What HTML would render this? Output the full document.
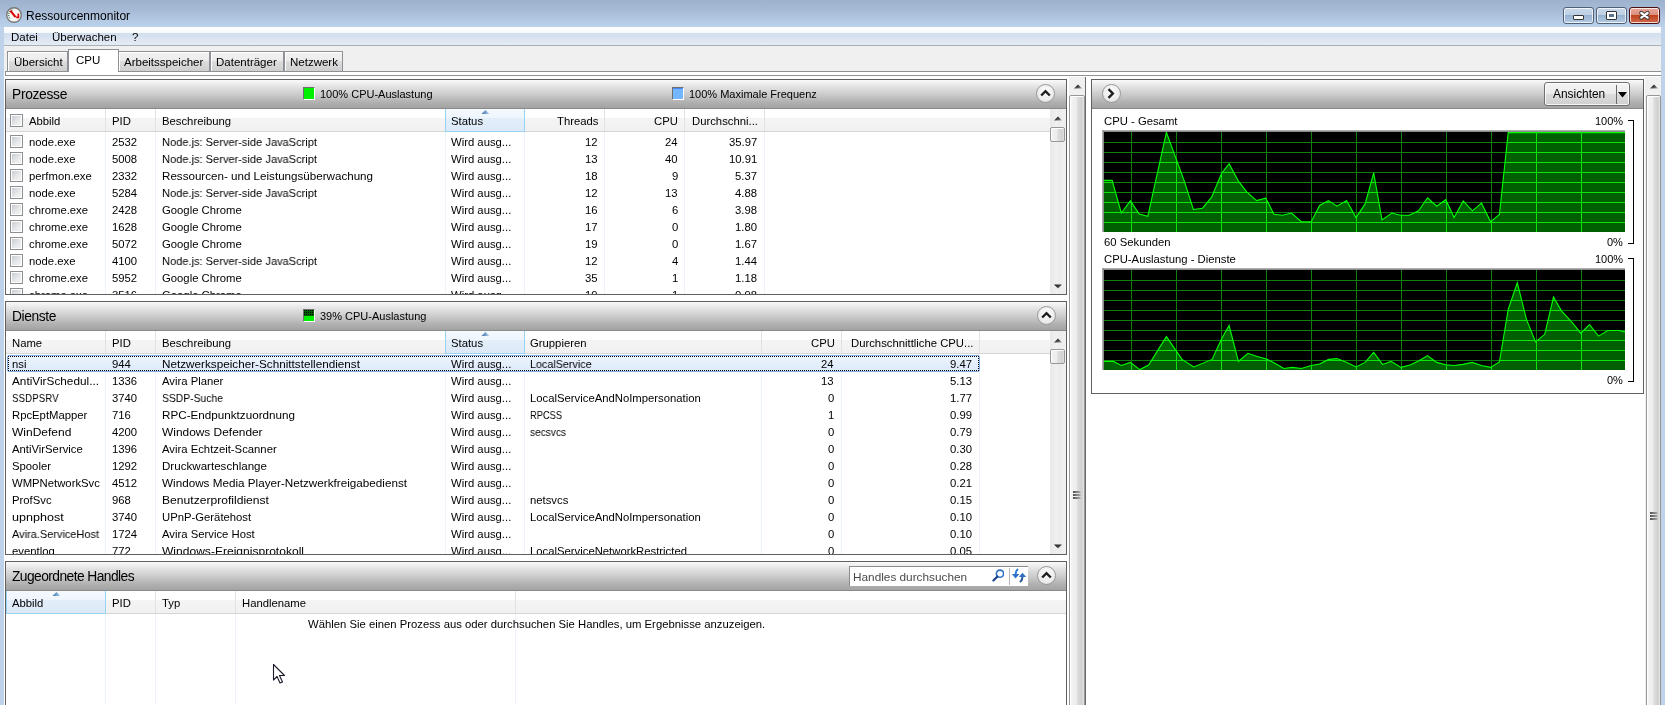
<!DOCTYPE html>
<html><head><meta charset="utf-8"><title>Ressourcenmonitor</title>
<style>
html,body{margin:0;padding:0;}
body{width:1665px;height:705px;overflow:hidden;position:relative;background:#fff;font-family:"Liberation Sans",sans-serif;color:#000;}
div{position:absolute;box-sizing:border-box;}
.t{white-space:pre;line-height:16px;height:16px;will-change:transform;}
svg{position:absolute;}
</style></head><body>
<svg width="0" height="0" style="position:absolute;left:0;top:0"><defs>
<linearGradient id="aup" x1="0" y1="0" x2="1" y2="1"><stop offset="0" stop-color="#111"/><stop offset="0.55" stop-color="#444"/><stop offset="1" stop-color="#b0b0b0"/></linearGradient>
<linearGradient id="adn" x1="0" y1="0" x2="1" y2="1"><stop offset="0" stop-color="#111"/><stop offset="0.55" stop-color="#444"/><stop offset="1" stop-color="#b0b0b0"/></linearGradient>
</defs></svg>
<div style="left:0px;top:0px;width:1665px;height:705px;background:#bed3ea;"></div>
<div style="left:0px;top:0px;width:1665px;height:27px;background:linear-gradient(#9db2ce 0%,#a7bbd6 40%,#b6cbe5 80%,#b9d2ea 100%);"></div>
<svg style="left:5px;top:6px" width="18" height="18" viewBox="0 0 18 18">
<circle cx="9" cy="9" r="7.3" fill="#f6f6f4" stroke="#7a7a7a" stroke-width="1.4"/>
<path d="M4.6 12.2 A5.2 5.2 0 0 1 8.5 3.9" stroke="#4f8a6a" stroke-width="1.5" fill="none" stroke-dasharray="1.1 1.1"/>
<path d="M5.3 4.6 L10.6 11.2" stroke="#e00000" stroke-width="2.1"/>
<path d="M13.4 7.4 L13.4 11.4 L11.2 11.4" stroke="#e00000" stroke-width="1.7" fill="none"/>
</svg>
<div class="t" style="left:26px;top:8px;font-size:12px;">Ressourcenmonitor</div>
<div style="left:1563px;top:7px;width:31px;height:17px;border:1px solid #4f6178;border-radius:3px;background:linear-gradient(#c9d8ea 0%,#bfd0e5 45%,#95b0cf 46%,#b5cbe5 100%);box-shadow:inset 0 0 0 1px rgba(255,255,255,0.75);"></div>
<div style="left:1596px;top:7px;width:31px;height:17px;border:1px solid #4f6178;border-radius:3px;background:linear-gradient(#c9d8ea 0%,#bfd0e5 45%,#95b0cf 46%,#b5cbe5 100%);box-shadow:inset 0 0 0 1px rgba(255,255,255,0.75);"></div>
<div style="left:1629px;top:7px;width:31px;height:17px;border:1px solid #4a1010;border-radius:3px;background:linear-gradient(#e9a89b 0%,#dc8f7e 45%,#c0401c 46%,#cf6a4e 100%);box-shadow:inset 0 0 0 1px rgba(255,255,255,0.75);"></div>
<div style="left:1573px;top:15px;width:11px;height:5px;background:#fff;border:1px solid #333;border-radius:1px;"></div>
<div style="left:1606px;top:11px;width:11px;height:9px;background:#fff;border:1px solid #333;border-radius:1px;"></div>
<div style="left:1609px;top:14px;width:5px;height:3px;background:#5a7190;"></div>
<svg style="left:1638px;top:10px" width="14" height="11" viewBox="0 0 14 11">
<path d="M3.3 3 L9.6 7.6 M9.6 3 L3.3 7.6" stroke="#3a3a3a" stroke-width="4.2" stroke-linecap="round"/>
<path d="M3.3 3 L9.6 7.6 M9.6 3 L3.3 7.6" stroke="#fff" stroke-width="2.3" stroke-linecap="round"/>
</svg>
<div style="left:4px;top:27px;width:1657px;height:19px;background:linear-gradient(#ffffff 0%,#f6f8fa 35%,#d2dfee 36%,#e5ebf3 100%);border-bottom:1px solid #a9b0b8;"></div>
<div class="t" style="left:11px;top:29px;font-size:11.5px;">Datei</div>
<div class="t" style="left:52px;top:29px;font-size:11.5px;">Überwachen</div>
<div class="t" style="left:132px;top:29px;font-size:11.5px;">?</div>
<div style="left:4px;top:46px;width:1657px;height:659px;background:#fff;"></div>
<div style="left:4px;top:46px;width:1657px;height:26px;background:#f0f0f0;"></div>
<div style="left:5px;top:71px;width:1656px;height:5px;background:#fff;border:1px solid #8e9296;border-right:none;"></div>
<div style="left:7px;top:51px;width:61px;height:20px;background:linear-gradient(#f3f3f3 0%,#ebebeb 45%,#dddddd 50%,#cfcfcf 100%);border:1px solid #8e9296;border-bottom:none;box-shadow:inset 1px 1px 0 #fff;"></div>
<div class="t" style="left:14px;top:54px;font-size:11.5px;">Übersicht</div>
<div style="left:118px;top:51px;width:92px;height:20px;background:linear-gradient(#f3f3f3 0%,#ebebeb 45%,#dddddd 50%,#cfcfcf 100%);border:1px solid #8e9296;border-bottom:none;box-shadow:inset 1px 1px 0 #fff;"></div>
<div class="t" style="left:124px;top:54px;font-size:11.5px;">Arbeitsspeicher</div>
<div style="left:210px;top:51px;width:74px;height:20px;background:linear-gradient(#f3f3f3 0%,#ebebeb 45%,#dddddd 50%,#cfcfcf 100%);border:1px solid #8e9296;border-bottom:none;box-shadow:inset 1px 1px 0 #fff;"></div>
<div class="t" style="left:216px;top:54px;font-size:11.5px;">Datenträger</div>
<div style="left:284px;top:51px;width:59px;height:20px;background:linear-gradient(#f3f3f3 0%,#ebebeb 45%,#dddddd 50%,#cfcfcf 100%);border:1px solid #8e9296;border-bottom:none;box-shadow:inset 1px 1px 0 #fff;"></div>
<div class="t" style="left:290px;top:54px;font-size:11.5px;">Netzwerk</div>
<div style="left:68px;top:49px;width:51px;height:23px;background:#fff;border:1px solid #8e9296;border-bottom:none;"></div>
<div class="t" style="left:76px;top:52px;font-size:11.5px;">CPU</div>
<div style="left:5px;top:79px;width:1062px;height:216px;border:1px solid #5f5f5f;border-bottom:1px solid #5f5f5f;background:#fff;"></div>
<div style="left:6px;top:80px;width:1060px;height:29px;background:linear-gradient(#fafafa 0%,#e2e2e2 25%,#c8c8c8 55%,#b0b0b0 80%,#a3a3a3 100%);border-bottom:1px solid #8a8a8a;"></div>
<div class="t" style="left:12px;top:87px;font-size:13.8px;letter-spacing:-0.312px;">Prozesse</div>
<div style="left:303px;top:87px;width:12px;height:13px;border-left:1px solid #707070;border-top:1px solid #707070;border-right:1px solid #fff;border-bottom:1px solid #fff;background:#00f000;"></div>
<div class="t" style="left:320px;top:86px;font-size:11px;">100% CPU-Auslastung</div>
<div style="left:672px;top:87px;width:12px;height:13px;border-left:1px solid #707070;border-top:1px solid #707070;border-right:1px solid #fff;border-bottom:1px solid #fff;background:linear-gradient(#4a88ff 0px,#4a88ff 1px,#74b6ff 1px);"></div>
<div class="t" style="left:689px;top:86px;font-size:11px;">100% Maximale Frequenz</div>
<div style="left:6px;top:109px;width:1044px;height:23px;background:linear-gradient(#ffffff 0%,#ffffff 40%,#f4f4f4 41%,#f1f1f1 100%);border-bottom:1px solid #d5d5d5;"></div>
<div style="left:105px;top:109px;width:1px;height:22px;background:#e2e2e2;"></div>
<div style="left:155px;top:109px;width:1px;height:22px;background:#e2e2e2;"></div>
<div style="left:445px;top:109px;width:1px;height:22px;background:#e2e2e2;"></div>
<div style="left:524px;top:109px;width:1px;height:22px;background:#e2e2e2;"></div>
<div style="left:604px;top:109px;width:1px;height:22px;background:#e2e2e2;"></div>
<div style="left:684px;top:109px;width:1px;height:22px;background:#e2e2e2;"></div>
<div style="left:764px;top:109px;width:1px;height:22px;background:#e2e2e2;"></div>
<div style="left:445px;top:109px;width:80px;height:23px;background:linear-gradient(#f4f9fe 0%,#eef5fc 40%,#e2eef9 41%,#dde9f7 100%);border:1px solid #96d3f5;border-top:none;"></div>
<svg style="left:481px;top:110px" width="9" height="4" viewBox="0 0 9 4"><defs><linearGradient id="sa109" x1="0" x2="1" y1="0" y2="0"><stop offset="0" stop-color="#3f6f9f"/><stop offset="0.5" stop-color="#6f9fcc"/><stop offset="1" stop-color="#c4dcf0"/></linearGradient></defs><path d="M0.5 4 L4.5 0 L8.5 4 Z" fill="url(#sa109)"/></svg>
<div style="left:10px;top:114px;width:13px;height:13px;border:1px solid #8e8f8f;background:linear-gradient(135deg,#c3c8cf 0%,#e6e8ea 55%,#f6f6f6 100%);box-shadow:inset 0 0 0 1px #fff;"></div>
<div class="t" style="left:29px;top:113px;font-size:11.3px;">Abbild</div>
<div class="t" style="left:112px;top:113px;font-size:11.3px;">PID</div>
<div class="t" style="left:162px;top:113px;font-size:11.3px;">Beschreibung</div>
<div class="t" style="left:451px;top:113px;font-size:11.3px;">Status</div>
<div class="t" style="right:1067px;top:113px;font-size:11.3px;text-align:right;">Threads</div>
<div class="t" style="right:987px;top:113px;font-size:11.3px;text-align:right;">CPU</div>
<div class="t" style="left:692px;top:113px;font-size:11.3px;">Durchschni...</div>
<div style="left:105px;top:132px;width:1px;height:162px;background:#edf3fb;"></div>
<div style="left:155px;top:132px;width:1px;height:162px;background:#edf3fb;"></div>
<div style="left:445px;top:132px;width:1px;height:162px;background:#edf3fb;"></div>
<div style="left:524px;top:132px;width:1px;height:162px;background:#edf3fb;"></div>
<div style="left:604px;top:132px;width:1px;height:162px;background:#edf3fb;"></div>
<div style="left:684px;top:132px;width:1px;height:162px;background:#edf3fb;"></div>
<div style="left:764px;top:132px;width:1px;height:162px;background:#edf3fb;"></div>
<div style="left:6px;top:132px;width:1044px;height:162px;overflow:hidden;">
<div style="left:4px;top:3px;width:13px;height:13px;border:1px solid #8e8f8f;background:linear-gradient(135deg,#c3c8cf 0%,#e6e8ea 55%,#f6f6f6 100%);box-shadow:inset 0 0 0 1px #fff;"></div>
<div class="t" style="left:23px;top:2px;font-size:11.3px;">node.exe</div>
<div class="t" style="left:106px;top:2px;font-size:11.3px;">2532</div>
<div class="t" style="left:156px;top:2px;font-size:11.3px;transform:scaleX(0.9797);transform-origin:0 0;">Node.js: Server-side JavaScript</div>
<div class="t" style="left:445px;top:2px;font-size:11.3px;">Wird ausg...</div>
<div class="t" style="right:452px;top:2px;font-size:11.3px;">12</div>
<div class="t" style="right:372px;top:2px;font-size:11.3px;">24</div>
<div class="t" style="right:293px;top:2px;font-size:11.3px;">35.97</div>
<div style="left:4px;top:20px;width:13px;height:13px;border:1px solid #8e8f8f;background:linear-gradient(135deg,#c3c8cf 0%,#e6e8ea 55%,#f6f6f6 100%);box-shadow:inset 0 0 0 1px #fff;"></div>
<div class="t" style="left:23px;top:19px;font-size:11.3px;">node.exe</div>
<div class="t" style="left:106px;top:19px;font-size:11.3px;">5008</div>
<div class="t" style="left:156px;top:19px;font-size:11.3px;transform:scaleX(0.9797);transform-origin:0 0;">Node.js: Server-side JavaScript</div>
<div class="t" style="left:445px;top:19px;font-size:11.3px;">Wird ausg...</div>
<div class="t" style="right:452px;top:19px;font-size:11.3px;">13</div>
<div class="t" style="right:372px;top:19px;font-size:11.3px;">40</div>
<div class="t" style="right:293px;top:19px;font-size:11.3px;">10.91</div>
<div style="left:4px;top:37px;width:13px;height:13px;border:1px solid #8e8f8f;background:linear-gradient(135deg,#c3c8cf 0%,#e6e8ea 55%,#f6f6f6 100%);box-shadow:inset 0 0 0 1px #fff;"></div>
<div class="t" style="left:23px;top:36px;font-size:11.3px;">perfmon.exe</div>
<div class="t" style="left:106px;top:36px;font-size:11.3px;">2332</div>
<div class="t" style="left:156px;top:36px;font-size:11.3px;transform:scaleX(1.0275);transform-origin:0 0;">Ressourcen- und Leistungsüberwachung</div>
<div class="t" style="left:445px;top:36px;font-size:11.3px;">Wird ausg...</div>
<div class="t" style="right:452px;top:36px;font-size:11.3px;">18</div>
<div class="t" style="right:372px;top:36px;font-size:11.3px;">9</div>
<div class="t" style="right:293px;top:36px;font-size:11.3px;">5.37</div>
<div style="left:4px;top:54px;width:13px;height:13px;border:1px solid #8e8f8f;background:linear-gradient(135deg,#c3c8cf 0%,#e6e8ea 55%,#f6f6f6 100%);box-shadow:inset 0 0 0 1px #fff;"></div>
<div class="t" style="left:23px;top:53px;font-size:11.3px;">node.exe</div>
<div class="t" style="left:106px;top:53px;font-size:11.3px;">5284</div>
<div class="t" style="left:156px;top:53px;font-size:11.3px;transform:scaleX(0.9797);transform-origin:0 0;">Node.js: Server-side JavaScript</div>
<div class="t" style="left:445px;top:53px;font-size:11.3px;">Wird ausg...</div>
<div class="t" style="right:452px;top:53px;font-size:11.3px;">12</div>
<div class="t" style="right:372px;top:53px;font-size:11.3px;">13</div>
<div class="t" style="right:293px;top:53px;font-size:11.3px;">4.88</div>
<div style="left:4px;top:71px;width:13px;height:13px;border:1px solid #8e8f8f;background:linear-gradient(135deg,#c3c8cf 0%,#e6e8ea 55%,#f6f6f6 100%);box-shadow:inset 0 0 0 1px #fff;"></div>
<div class="t" style="left:23px;top:70px;font-size:11.3px;">chrome.exe</div>
<div class="t" style="left:106px;top:70px;font-size:11.3px;">2428</div>
<div class="t" style="left:156px;top:70px;font-size:11.3px;">Google Chrome</div>
<div class="t" style="left:445px;top:70px;font-size:11.3px;">Wird ausg...</div>
<div class="t" style="right:452px;top:70px;font-size:11.3px;">16</div>
<div class="t" style="right:372px;top:70px;font-size:11.3px;">6</div>
<div class="t" style="right:293px;top:70px;font-size:11.3px;">3.98</div>
<div style="left:4px;top:88px;width:13px;height:13px;border:1px solid #8e8f8f;background:linear-gradient(135deg,#c3c8cf 0%,#e6e8ea 55%,#f6f6f6 100%);box-shadow:inset 0 0 0 1px #fff;"></div>
<div class="t" style="left:23px;top:87px;font-size:11.3px;">chrome.exe</div>
<div class="t" style="left:106px;top:87px;font-size:11.3px;">1628</div>
<div class="t" style="left:156px;top:87px;font-size:11.3px;">Google Chrome</div>
<div class="t" style="left:445px;top:87px;font-size:11.3px;">Wird ausg...</div>
<div class="t" style="right:452px;top:87px;font-size:11.3px;">17</div>
<div class="t" style="right:372px;top:87px;font-size:11.3px;">0</div>
<div class="t" style="right:293px;top:87px;font-size:11.3px;">1.80</div>
<div style="left:4px;top:105px;width:13px;height:13px;border:1px solid #8e8f8f;background:linear-gradient(135deg,#c3c8cf 0%,#e6e8ea 55%,#f6f6f6 100%);box-shadow:inset 0 0 0 1px #fff;"></div>
<div class="t" style="left:23px;top:104px;font-size:11.3px;">chrome.exe</div>
<div class="t" style="left:106px;top:104px;font-size:11.3px;">5072</div>
<div class="t" style="left:156px;top:104px;font-size:11.3px;">Google Chrome</div>
<div class="t" style="left:445px;top:104px;font-size:11.3px;">Wird ausg...</div>
<div class="t" style="right:452px;top:104px;font-size:11.3px;">19</div>
<div class="t" style="right:372px;top:104px;font-size:11.3px;">0</div>
<div class="t" style="right:293px;top:104px;font-size:11.3px;">1.67</div>
<div style="left:4px;top:122px;width:13px;height:13px;border:1px solid #8e8f8f;background:linear-gradient(135deg,#c3c8cf 0%,#e6e8ea 55%,#f6f6f6 100%);box-shadow:inset 0 0 0 1px #fff;"></div>
<div class="t" style="left:23px;top:121px;font-size:11.3px;">node.exe</div>
<div class="t" style="left:106px;top:121px;font-size:11.3px;">4100</div>
<div class="t" style="left:156px;top:121px;font-size:11.3px;transform:scaleX(0.9797);transform-origin:0 0;">Node.js: Server-side JavaScript</div>
<div class="t" style="left:445px;top:121px;font-size:11.3px;">Wird ausg...</div>
<div class="t" style="right:452px;top:121px;font-size:11.3px;">12</div>
<div class="t" style="right:372px;top:121px;font-size:11.3px;">4</div>
<div class="t" style="right:293px;top:121px;font-size:11.3px;">1.44</div>
<div style="left:4px;top:139px;width:13px;height:13px;border:1px solid #8e8f8f;background:linear-gradient(135deg,#c3c8cf 0%,#e6e8ea 55%,#f6f6f6 100%);box-shadow:inset 0 0 0 1px #fff;"></div>
<div class="t" style="left:23px;top:138px;font-size:11.3px;">chrome.exe</div>
<div class="t" style="left:106px;top:138px;font-size:11.3px;">5952</div>
<div class="t" style="left:156px;top:138px;font-size:11.3px;">Google Chrome</div>
<div class="t" style="left:445px;top:138px;font-size:11.3px;">Wird ausg...</div>
<div class="t" style="right:452px;top:138px;font-size:11.3px;">35</div>
<div class="t" style="right:372px;top:138px;font-size:11.3px;">1</div>
<div class="t" style="right:293px;top:138px;font-size:11.3px;">1.18</div>
<div style="left:4px;top:156px;width:13px;height:13px;border:1px solid #8e8f8f;background:linear-gradient(135deg,#c3c8cf 0%,#e6e8ea 55%,#f6f6f6 100%);box-shadow:inset 0 0 0 1px #fff;"></div>
<div class="t" style="left:23px;top:155px;font-size:11.3px;">chrome.exe</div>
<div class="t" style="left:106px;top:155px;font-size:11.3px;">3516</div>
<div class="t" style="left:156px;top:155px;font-size:11.3px;">Google Chrome</div>
<div class="t" style="left:445px;top:155px;font-size:11.3px;">Wird ausg...</div>
<div class="t" style="right:452px;top:155px;font-size:11.3px;">19</div>
<div class="t" style="right:372px;top:155px;font-size:11.3px;">1</div>
<div class="t" style="right:293px;top:155px;font-size:11.3px;">0.98</div>
</div>
<div style="left:1050px;top:109px;width:16px;height:185px;background:linear-gradient(90deg,#e9e9e9,#f1f1f1 50%,#ececec 51%,#f0f0f0);"></div>
<svg style="left:1054px;top:116px" width="8" height="5" viewBox="0 0 8 5"><path d="M0 4.5 L4 0.5 L8 4.5Z" fill="url(#aup)"/></svg>
<div style="left:1050px;top:127px;width:15px;height:15px;border:1px solid #979797;border-radius:2px;background:linear-gradient(90deg,#f3f3f3 0%,#ececec 45%,#dcdcdc 55%,#d2d2d2 90%,#e6e6e6 100%);box-shadow:inset 1px 1px 0 #fff;"></div>
<svg style="left:1054px;top:284px" width="8" height="5" viewBox="0 0 8 5"><path d="M0 0.5 L4 4.5 L8 0.5Z" fill="url(#adn)"/></svg>
<div style="left:1036px;top:84px;width:19px;height:19px;border-radius:50%;border:1px solid #9a9a9a;background:radial-gradient(circle at 50% 35%,#fdfdfd 0%,#ececec 60%,#d8d8d8 100%);"></div>
<svg style="left:1040px;top:89px" width="11" height="8" viewBox="0 0 11 8"><path d="M1.2 6.5 L5.5 2.2 L9.8 6.5" stroke="#1e1e1e" stroke-width="2.4" fill="none"/></svg>
<div style="left:5px;top:301px;width:1062px;height:254px;border:1px solid #5f5f5f;border-bottom:1px solid #5f5f5f;background:#fff;"></div>
<div style="left:6px;top:302px;width:1060px;height:29px;background:linear-gradient(#fafafa 0%,#e2e2e2 25%,#c8c8c8 55%,#b0b0b0 80%,#a3a3a3 100%);border-bottom:1px solid #8a8a8a;"></div>
<div class="t" style="left:12px;top:309px;font-size:13.8px;letter-spacing:-0.400px;">Dienste</div>
<div style="left:303px;top:309px;width:12px;height:13px;border-left:1px solid #707070;border-top:1px solid #707070;border-right:1px solid #fff;border-bottom:1px solid #fff;background:linear-gradient(#006000 0px,#006000 6px,#00f000 6px);"></div>
<svg style="left:304px;top:310px" width="10" height="6" shape-rendering="crispEdges"><defs><pattern id="dp" width="2" height="2" patternUnits="userSpaceOnUse"><rect width="1" height="1" fill="#000"/></pattern></defs><rect width="10" height="6" fill="url(#dp)"/></svg>
<div class="t" style="left:320px;top:308px;font-size:11px;">39% CPU-Auslastung</div>
<div style="left:1037px;top:306px;width:19px;height:19px;border-radius:50%;border:1px solid #9a9a9a;background:radial-gradient(circle at 50% 35%,#fdfdfd 0%,#ececec 60%,#d8d8d8 100%);"></div>
<svg style="left:1041px;top:311px" width="11" height="8" viewBox="0 0 11 8"><path d="M1.2 6.5 L5.5 2.2 L9.8 6.5" stroke="#1e1e1e" stroke-width="2.4" fill="none"/></svg>
<div style="left:6px;top:331px;width:1044px;height:23px;background:linear-gradient(#ffffff 0%,#ffffff 40%,#f4f4f4 41%,#f1f1f1 100%);border-bottom:1px solid #d5d5d5;"></div>
<div style="left:105px;top:331px;width:1px;height:22px;background:#e2e2e2;"></div>
<div style="left:155px;top:331px;width:1px;height:22px;background:#e2e2e2;"></div>
<div style="left:445px;top:331px;width:1px;height:22px;background:#e2e2e2;"></div>
<div style="left:524px;top:331px;width:1px;height:22px;background:#e2e2e2;"></div>
<div style="left:761px;top:331px;width:1px;height:22px;background:#e2e2e2;"></div>
<div style="left:841px;top:331px;width:1px;height:22px;background:#e2e2e2;"></div>
<div style="left:979px;top:331px;width:1px;height:22px;background:#e2e2e2;"></div>
<div style="left:445px;top:331px;width:80px;height:23px;background:linear-gradient(#f4f9fe 0%,#eef5fc 40%,#e2eef9 41%,#dde9f7 100%);border:1px solid #96d3f5;border-top:none;"></div>
<svg style="left:481px;top:332px" width="9" height="4" viewBox="0 0 9 4"><defs><linearGradient id="sa331" x1="0" x2="1" y1="0" y2="0"><stop offset="0" stop-color="#3f6f9f"/><stop offset="0.5" stop-color="#6f9fcc"/><stop offset="1" stop-color="#c4dcf0"/></linearGradient></defs><path d="M0.5 4 L4.5 0 L8.5 4 Z" fill="url(#sa331)"/></svg>
<div class="t" style="left:12px;top:335px;font-size:11.3px;">Name</div>
<div class="t" style="left:112px;top:335px;font-size:11.3px;">PID</div>
<div class="t" style="left:162px;top:335px;font-size:11.3px;">Beschreibung</div>
<div class="t" style="left:451px;top:335px;font-size:11.3px;">Status</div>
<div class="t" style="left:530px;top:335px;font-size:11.3px;">Gruppieren</div>
<div class="t" style="right:830px;top:335px;font-size:11.3px;text-align:right;">CPU</div>
<div class="t" style="left:851px;top:335px;font-size:11.3px;">Durchschnittliche CPU...</div>
<div style="left:105px;top:354px;width:1px;height:200px;background:#edf3fb;"></div>
<div style="left:155px;top:354px;width:1px;height:200px;background:#edf3fb;"></div>
<div style="left:445px;top:354px;width:1px;height:200px;background:#edf3fb;"></div>
<div style="left:524px;top:354px;width:1px;height:200px;background:#edf3fb;"></div>
<div style="left:761px;top:354px;width:1px;height:200px;background:#edf3fb;"></div>
<div style="left:841px;top:354px;width:1px;height:200px;background:#edf3fb;"></div>
<div style="left:979px;top:354px;width:1px;height:200px;background:#edf3fb;"></div>
<div style="left:6px;top:354px;width:1044px;height:200px;overflow:hidden;">
<div style="left:1px;top:1px;width:973px;height:17px;border:1px solid #84acdd;border-radius:2px;background:linear-gradient(#edf4fc,#dceafa);"></div>
<div style="left:2px;top:2px;width:971px;height:15px;border:1px dotted #000;"></div>
<div class="t" style="left:6px;top:2px;font-size:11.3px;">nsi</div>
<div class="t" style="left:106px;top:2px;font-size:11.3px;">944</div>
<div class="t" style="left:156px;top:2px;font-size:11.3px;transform:scaleX(1.0372);transform-origin:0 0;">Netzwerkspeicher-Schnittstellendienst</div>
<div class="t" style="left:445px;top:2px;font-size:11.3px;">Wird ausg...</div>
<div class="t" style="left:524px;top:2px;font-size:11.3px;transform:scaleX(0.9523);transform-origin:0 0;">LocalService</div>
<div class="t" style="right:216px;top:2px;font-size:11.3px;">24</div>
<div class="t" style="right:78px;top:2px;font-size:11.3px;">9.47</div>
<div class="t" style="left:6px;top:19px;font-size:11.3px;transform:scaleX(1.0443);transform-origin:0 0;">AntiVirSchedul...</div>
<div class="t" style="left:106px;top:19px;font-size:11.3px;">1336</div>
<div class="t" style="left:156px;top:19px;font-size:11.3px;">Avira Planer</div>
<div class="t" style="left:445px;top:19px;font-size:11.3px;">Wird ausg...</div>
<div class="t" style="right:216px;top:19px;font-size:11.3px;">13</div>
<div class="t" style="right:78px;top:19px;font-size:11.3px;">5.13</div>
<div class="t" style="left:6px;top:36px;font-size:11.3px;transform:scaleX(0.8681);transform-origin:0 0;">SSDPSRV</div>
<div class="t" style="left:106px;top:36px;font-size:11.3px;">3740</div>
<div class="t" style="left:156px;top:36px;font-size:11.3px;transform:scaleX(0.9164);transform-origin:0 0;">SSDP-Suche</div>
<div class="t" style="left:445px;top:36px;font-size:11.3px;">Wird ausg...</div>
<div class="t" style="left:524px;top:36px;font-size:11.3px;">LocalServiceAndNoImpersonation</div>
<div class="t" style="right:216px;top:36px;font-size:11.3px;">0</div>
<div class="t" style="right:78px;top:36px;font-size:11.3px;">1.77</div>
<div class="t" style="left:6px;top:53px;font-size:11.3px;">RpcEptMapper</div>
<div class="t" style="left:106px;top:53px;font-size:11.3px;">716</div>
<div class="t" style="left:156px;top:53px;font-size:11.3px;transform:scaleX(1.033);transform-origin:0 0;">RPC-Endpunktzuordnung</div>
<div class="t" style="left:445px;top:53px;font-size:11.3px;">Wird ausg...</div>
<div class="t" style="left:524px;top:53px;font-size:11.3px;transform:scaleX(0.8222);transform-origin:0 0;">RPCSS</div>
<div class="t" style="right:216px;top:53px;font-size:11.3px;">1</div>
<div class="t" style="right:78px;top:53px;font-size:11.3px;">0.99</div>
<div class="t" style="left:6px;top:70px;font-size:11.3px;transform:scaleX(1.0628);transform-origin:0 0;">WinDefend</div>
<div class="t" style="left:106px;top:70px;font-size:11.3px;">4200</div>
<div class="t" style="left:156px;top:70px;font-size:11.3px;transform:scaleX(1.0539);transform-origin:0 0;">Windows Defender</div>
<div class="t" style="left:445px;top:70px;font-size:11.3px;">Wird ausg...</div>
<div class="t" style="left:524px;top:70px;font-size:11.3px;transform:scaleX(0.8958);transform-origin:0 0;">secsvcs</div>
<div class="t" style="right:216px;top:70px;font-size:11.3px;">0</div>
<div class="t" style="right:78px;top:70px;font-size:11.3px;">0.79</div>
<div class="t" style="left:6px;top:87px;font-size:11.3px;">AntiVirService</div>
<div class="t" style="left:106px;top:87px;font-size:11.3px;">1396</div>
<div class="t" style="left:156px;top:87px;font-size:11.3px;">Avira Echtzeit-Scanner</div>
<div class="t" style="left:445px;top:87px;font-size:11.3px;">Wird ausg...</div>
<div class="t" style="right:216px;top:87px;font-size:11.3px;">0</div>
<div class="t" style="right:78px;top:87px;font-size:11.3px;">0.30</div>
<div class="t" style="left:6px;top:104px;font-size:11.3px;">Spooler</div>
<div class="t" style="left:106px;top:104px;font-size:11.3px;">1292</div>
<div class="t" style="left:156px;top:104px;font-size:11.3px;transform:scaleX(1.0258);transform-origin:0 0;">Druckwarteschlange</div>
<div class="t" style="left:445px;top:104px;font-size:11.3px;">Wird ausg...</div>
<div class="t" style="right:216px;top:104px;font-size:11.3px;">0</div>
<div class="t" style="right:78px;top:104px;font-size:11.3px;">0.28</div>
<div class="t" style="left:6px;top:121px;font-size:11.3px;">WMPNetworkSvc</div>
<div class="t" style="left:106px;top:121px;font-size:11.3px;">4512</div>
<div class="t" style="left:156px;top:121px;font-size:11.3px;transform:scaleX(1.035);transform-origin:0 0;">Windows Media Player-Netzwerkfreigabedienst</div>
<div class="t" style="left:445px;top:121px;font-size:11.3px;">Wird ausg...</div>
<div class="t" style="right:216px;top:121px;font-size:11.3px;">0</div>
<div class="t" style="right:78px;top:121px;font-size:11.3px;">0.21</div>
<div class="t" style="left:6px;top:138px;font-size:11.3px;">ProfSvc</div>
<div class="t" style="left:106px;top:138px;font-size:11.3px;">968</div>
<div class="t" style="left:156px;top:138px;font-size:11.3px;transform:scaleX(1.0715);transform-origin:0 0;">Benutzerprofildienst</div>
<div class="t" style="left:445px;top:138px;font-size:11.3px;">Wird ausg...</div>
<div class="t" style="left:524px;top:138px;font-size:11.3px;">netsvcs</div>
<div class="t" style="right:216px;top:138px;font-size:11.3px;">0</div>
<div class="t" style="right:78px;top:138px;font-size:11.3px;">0.15</div>
<div class="t" style="left:6px;top:155px;font-size:11.3px;transform:scaleX(1.1122);transform-origin:0 0;">upnphost</div>
<div class="t" style="left:106px;top:155px;font-size:11.3px;">3740</div>
<div class="t" style="left:156px;top:155px;font-size:11.3px;">UPnP-Gerätehost</div>
<div class="t" style="left:445px;top:155px;font-size:11.3px;">Wird ausg...</div>
<div class="t" style="left:524px;top:155px;font-size:11.3px;">LocalServiceAndNoImpersonation</div>
<div class="t" style="right:216px;top:155px;font-size:11.3px;">0</div>
<div class="t" style="right:78px;top:155px;font-size:11.3px;">0.10</div>
<div class="t" style="left:6px;top:172px;font-size:11.3px;transform:scaleX(0.9712);transform-origin:0 0;">Avira.ServiceHost</div>
<div class="t" style="left:106px;top:172px;font-size:11.3px;">1724</div>
<div class="t" style="left:156px;top:172px;font-size:11.3px;">Avira Service Host</div>
<div class="t" style="left:445px;top:172px;font-size:11.3px;">Wird ausg...</div>
<div class="t" style="right:216px;top:172px;font-size:11.3px;">0</div>
<div class="t" style="right:78px;top:172px;font-size:11.3px;">0.10</div>
<div class="t" style="left:6px;top:189px;font-size:11.3px;">eventlog</div>
<div class="t" style="left:106px;top:189px;font-size:11.3px;">772</div>
<div class="t" style="left:156px;top:189px;font-size:11.3px;transform:scaleX(1.0668);transform-origin:0 0;">Windows-Ereignisprotokoll</div>
<div class="t" style="left:445px;top:189px;font-size:11.3px;">Wird ausg...</div>
<div class="t" style="left:524px;top:189px;font-size:11.3px;">LocalServiceNetworkRestricted</div>
<div class="t" style="right:216px;top:189px;font-size:11.3px;">0</div>
<div class="t" style="right:78px;top:189px;font-size:11.3px;">0.05</div>
</div>
<div style="left:1050px;top:331px;width:16px;height:223px;background:linear-gradient(90deg,#e9e9e9,#f1f1f1 50%,#ececec 51%,#f0f0f0);"></div>
<svg style="left:1054px;top:338px" width="8" height="5" viewBox="0 0 8 5"><path d="M0 4.5 L4 0.5 L8 4.5Z" fill="url(#aup)"/></svg>
<div style="left:1050px;top:349px;width:15px;height:15px;border:1px solid #979797;border-radius:2px;background:linear-gradient(90deg,#f3f3f3 0%,#ececec 45%,#dcdcdc 55%,#d2d2d2 90%,#e6e6e6 100%);box-shadow:inset 1px 1px 0 #fff;"></div>
<svg style="left:1054px;top:544px" width="8" height="5" viewBox="0 0 8 5"><path d="M0 0.5 L4 4.5 L8 0.5Z" fill="url(#adn)"/></svg>
<div style="left:5px;top:561px;width:1062px;height:145px;border:1px solid #5f5f5f;border-bottom:none;background:#fff;"></div>
<div style="left:6px;top:562px;width:1060px;height:29px;background:linear-gradient(#fafafa 0%,#e2e2e2 25%,#c8c8c8 55%,#b0b0b0 80%,#a3a3a3 100%);border-bottom:1px solid #8a8a8a;"></div>
<div class="t" style="left:12px;top:569px;font-size:13.8px;letter-spacing:-0.563px;">Zugeordnete Handles</div>
<div style="left:849px;top:566px;width:179px;height:20px;border-left:1px solid #8c8c8c;border-top:1px solid #8c8c8c;background:#fff;"></div>
<div class="t" style="left:853px;top:569px;font-size:11.8px;color:#4a4a4a;">Handles durchsuchen</div>
<svg style="left:990px;top:568px" width="14" height="15" viewBox="0 0 14 15">
<circle cx="10" cy="5.7" r="3.6" stroke="#2a6dc4" stroke-width="1.6" fill="none"/>
<path d="M7.4 8.6 L3.4 12.6" stroke="#173f85" stroke-width="2.1" stroke-linecap="round"/></svg>
<div style="left:1009px;top:568px;width:1px;height:17px;background:#b8b8b8;"></div>
<svg style="left:1010px;top:567px" width="18" height="17" viewBox="0 0 18 17">
<path d="M5.6 8 C5.6 5, 6.2 3.2, 8.2 2.2" stroke="#2b7ad6" stroke-width="1.9" fill="none"/>
<path d="M1.8 7 L9.4 7 L5.6 11.4Z" fill="#2f73c8"/>
<path d="M12.5 9 C12.5 12, 12 14, 9.8 14.8" stroke="#1f4f98" stroke-width="1.9" fill="none"/>
<path d="M8.8 10 L16.2 10 L12.5 5.8Z" fill="#2f6fc0"/>
</svg>
<div style="left:1037px;top:566px;width:19px;height:19px;border-radius:50%;border:1px solid #9a9a9a;background:radial-gradient(circle at 50% 35%,#fdfdfd 0%,#ececec 60%,#d8d8d8 100%);"></div>
<svg style="left:1041px;top:571px" width="11" height="8" viewBox="0 0 11 8"><path d="M1.2 6.5 L5.5 2.2 L9.8 6.5" stroke="#1e1e1e" stroke-width="2.4" fill="none"/></svg>
<div style="left:6px;top:591px;width:1060px;height:23px;background:linear-gradient(#ffffff 0%,#ffffff 40%,#f4f4f4 41%,#f1f1f1 100%);border-bottom:1px solid #d5d5d5;"></div>
<div style="left:105px;top:591px;width:1px;height:22px;background:#e2e2e2;"></div>
<div style="left:155px;top:591px;width:1px;height:22px;background:#e2e2e2;"></div>
<div style="left:235px;top:591px;width:1px;height:22px;background:#e2e2e2;"></div>
<div style="left:515px;top:591px;width:1px;height:22px;background:#e2e2e2;"></div>
<div style="left:6px;top:591px;width:100px;height:23px;background:linear-gradient(#f4f9fe 0%,#eef5fc 40%,#e2eef9 41%,#dde9f7 100%);border:1px solid #96d3f5;border-top:none;"></div>
<svg style="left:52px;top:592px" width="9" height="4" viewBox="0 0 9 4"><defs><linearGradient id="sa591" x1="0" x2="1" y1="0" y2="0"><stop offset="0" stop-color="#3f6f9f"/><stop offset="0.5" stop-color="#6f9fcc"/><stop offset="1" stop-color="#c4dcf0"/></linearGradient></defs><path d="M0.5 4 L4.5 0 L8.5 4 Z" fill="url(#sa591)"/></svg>
<div class="t" style="left:12px;top:595px;font-size:11.3px;">Abbild</div>
<div class="t" style="left:112px;top:595px;font-size:11.3px;">PID</div>
<div class="t" style="left:162px;top:595px;font-size:11.3px;">Typ</div>
<div class="t" style="left:242px;top:595px;font-size:11.3px;">Handlename</div>
<div style="left:105px;top:614px;width:1px;height:91px;background:#edf3fb;"></div>
<div style="left:155px;top:614px;width:1px;height:91px;background:#edf3fb;"></div>
<div style="left:235px;top:614px;width:1px;height:91px;background:#edf3fb;"></div>
<div style="left:515px;top:614px;width:1px;height:91px;background:#edf3fb;"></div>
<div class="t" style="left:308px;top:616px;font-size:11.3px;">Wählen Sie einen Prozess aus oder durchsuchen Sie Handles, um Ergebnisse anzuzeigen.</div>
<svg style="left:272px;top:663px" width="14" height="22" viewBox="0 0 14 22">
<path d="M1.5 1.5 L1.5 17 L5 13.5 L8 20 L10.5 19 L7.5 12.5 L12.5 12.5 Z" fill="#fff" stroke="#1a1a2a" stroke-width="1.1" stroke-linejoin="round"/></svg>
<div style="left:1069px;top:77px;width:16px;height:628px;background:#f0f0f0;"></div>
<svg style="left:1074px;top:84px" width="8" height="5" viewBox="0 0 8 5"><path d="M0 4.5 L4 0.5 L8 4.5Z" fill="url(#aup)"/></svg>
<div style="left:1069px;top:95px;width:16px;height:620px;border:1px solid #979797;border-radius:2px;background:linear-gradient(90deg,#f5f5f5 0%,#ededed 45%,#dcdcdc 55%,#d0d0d0 85%,#e8e8e8 100%);box-shadow:inset 1px 1px 0 #fff;"></div>
<div style="left:1085px;top:77px;width:1px;height:628px;background:#6a6a6a;"></div>
<svg style="left:1073px;top:491px" width="8" height="8" viewBox="0 0 8 8"><defs><linearGradient id="gr"><stop offset="0" stop-color="#1a1a1a"/><stop offset="1" stop-color="#a0a0a0"/></linearGradient></defs><path d="M0 1 H7.5 M0 4 H7.5 M0 7 H7.5" stroke="url(#gr)" stroke-width="1.6"/></svg>
<div style="left:1645px;top:77px;width:16px;height:628px;background:#f0f0f0;"></div>
<svg style="left:1650px;top:84px" width="8" height="5" viewBox="0 0 8 5"><path d="M0 4.5 L4 0.5 L8 4.5Z" fill="url(#aup)"/></svg>
<div style="left:1646px;top:95px;width:15px;height:620px;border:1px solid #979797;border-radius:2px;background:linear-gradient(90deg,#f5f5f5 0%,#ededed 45%,#dcdcdc 55%,#d0d0d0 85%,#e8e8e8 100%);box-shadow:inset 1px 1px 0 #fff;"></div>
<svg style="left:1650px;top:512px" width="8" height="8" viewBox="0 0 8 8"><path d="M0 1 H7.5 M0 4 H7.5 M0 7 H7.5" stroke="url(#gr)" stroke-width="1.6"/></svg>
<div style="left:1091px;top:79px;width:553px;height:315px;border:1px solid #5f5f5f;border-bottom:1px solid #5f5f5f;background:#fff;"></div>
<div style="left:1092px;top:80px;width:551px;height:29px;background:linear-gradient(#fafafa 0%,#e2e2e2 25%,#c8c8c8 55%,#b0b0b0 80%,#a3a3a3 100%);border-bottom:1px solid #8a8a8a;"></div>
<div style="left:1102px;top:84px;width:19px;height:19px;border-radius:50%;border:1px solid #9a9a9a;background:radial-gradient(circle at 50% 35%,#fdfdfd 0%,#ececec 60%,#d8d8d8 100%);"></div>
<svg style="left:1107px;top:88px" width="8" height="11" viewBox="0 0 8 11"><path d="M1.5 1.2 L5.8 5.5 L1.5 9.8" stroke="#1e1e1e" stroke-width="2.4" fill="none"/></svg>
<div style="left:1544px;top:82px;width:86px;height:24px;border:1px solid #707070;border-radius:3px;background:linear-gradient(#f4f4f4 0%,#ebebeb 48%,#dddddd 50%,#cfcfcf 100%);box-shadow:inset 0 0 0 1px rgba(255,255,255,0.8);"></div>
<div class="t" style="left:1553px;top:86px;font-size:11.9px;">Ansichten</div>
<div style="left:1616px;top:85px;width:1px;height:19px;background:#6a6a6a;"></div>
<svg style="left:1618px;top:92px" width="10" height="6" viewBox="0 0 10 6"><path d="M0 0 L9 0 L4.5 5.5Z" fill="#000"/></svg>
<div style="left:1102px;top:130px;width:523px;height:2px;background:linear-gradient(#bdbdbd,#7d7d7d);"></div>
<div style="left:1102px;top:130px;width:2px;height:102px;background:linear-gradient(90deg,#bdbdbd,#7d7d7d);"></div>
<svg style="left:1104px;top:132px" width="521" height="100" viewBox="0 0 521 100" shape-rendering="crispEdges">
<defs><clipPath id="c1"><polygon points="-0.2,48.4 8.1,48.4 17.3,81.0 26.4,68.6 35.2,82.1 43.8,84.4 62.4,0.3 80.3,49.1 89.4,77.5 98.5,76.2 107.6,65.1 117.5,41.5 125.1,31.7 134.4,49.1 142.7,59.8 152.6,68.6 161.7,66.1 170.0,82.2 178.4,83.3 187.5,81.0 197.4,89.7 207.2,89.7 215.6,73.4 224.4,68.6 233.0,74.2 242.6,68.6 252.0,85.6 261.1,71.9 269.7,40.8 278.0,87.9 287.9,81.0 296.2,83.3 305.3,83.3 314.5,78.8 323.6,65.8 332.7,74.2 341.8,67.7 350.1,85.6 359.2,68.9 368.4,78.8 377.5,71.2 386.6,89.8 395.4,82.5 404.2,0.6 521.5,0.6 522,101 -1,101"/></clipPath></defs>
<rect width="521" height="100" fill="#000"/>
<g fill="#0f7f0f"><rect x="27" y="0" width="1" height="100"/><rect x="72" y="0" width="1" height="100"/><rect x="117" y="0" width="1" height="100"/><rect x="162" y="0" width="1" height="100"/><rect x="207" y="0" width="1" height="100"/><rect x="252" y="0" width="1" height="100"/><rect x="297" y="0" width="1" height="100"/><rect x="342" y="0" width="1" height="100"/><rect x="387" y="0" width="1" height="100"/><rect x="432" y="0" width="1" height="100"/><rect x="477" y="0" width="1" height="100"/><rect x="0" y="10" width="521" height="1"/><rect x="0" y="20" width="521" height="1"/><rect x="0" y="30" width="521" height="1"/><rect x="0" y="40" width="521" height="1"/><rect x="0" y="50" width="521" height="1"/><rect x="0" y="60" width="521" height="1"/><rect x="0" y="70" width="521" height="1"/><rect x="0" y="80" width="521" height="1"/><rect x="0" y="90" width="521" height="1"/></g>
<polygon points="-0.2,48.4 8.1,48.4 17.3,81.0 26.4,68.6 35.2,82.1 43.8,84.4 62.4,0.3 80.3,49.1 89.4,77.5 98.5,76.2 107.6,65.1 117.5,41.5 125.1,31.7 134.4,49.1 142.7,59.8 152.6,68.6 161.7,66.1 170.0,82.2 178.4,83.3 187.5,81.0 197.4,89.7 207.2,89.7 215.6,73.4 224.4,68.6 233.0,74.2 242.6,68.6 252.0,85.6 261.1,71.9 269.7,40.8 278.0,87.9 287.9,81.0 296.2,83.3 305.3,83.3 314.5,78.8 323.6,65.8 332.7,74.2 341.8,67.7 350.1,85.6 359.2,68.9 368.4,78.8 377.5,71.2 386.6,89.8 395.4,82.5 404.2,0.6 521.5,0.6 522,101 -1,101" fill="#005f00"/>
<g fill="#0ce40c" clip-path="url(#c1)"><rect x="27" y="0" width="1" height="100"/><rect x="72" y="0" width="1" height="100"/><rect x="117" y="0" width="1" height="100"/><rect x="162" y="0" width="1" height="100"/><rect x="207" y="0" width="1" height="100"/><rect x="252" y="0" width="1" height="100"/><rect x="297" y="0" width="1" height="100"/><rect x="342" y="0" width="1" height="100"/><rect x="387" y="0" width="1" height="100"/><rect x="432" y="0" width="1" height="100"/><rect x="477" y="0" width="1" height="100"/><rect x="0" y="10" width="521" height="1"/><rect x="0" y="20" width="521" height="1"/><rect x="0" y="30" width="521" height="1"/><rect x="0" y="40" width="521" height="1"/><rect x="0" y="50" width="521" height="1"/><rect x="0" y="60" width="521" height="1"/><rect x="0" y="70" width="521" height="1"/><rect x="0" y="80" width="521" height="1"/><rect x="0" y="90" width="521" height="1"/></g>
<polyline points="-0.2,48.4 8.1,48.4 17.3,81.0 26.4,68.6 35.2,82.1 43.8,84.4 62.4,0.3 80.3,49.1 89.4,77.5 98.5,76.2 107.6,65.1 117.5,41.5 125.1,31.7 134.4,49.1 142.7,59.8 152.6,68.6 161.7,66.1 170.0,82.2 178.4,83.3 187.5,81.0 197.4,89.7 207.2,89.7 215.6,73.4 224.4,68.6 233.0,74.2 242.6,68.6 252.0,85.6 261.1,71.9 269.7,40.8 278.0,87.9 287.9,81.0 296.2,83.3 305.3,83.3 314.5,78.8 323.6,65.8 332.7,74.2 341.8,67.7 350.1,85.6 359.2,68.9 368.4,78.8 377.5,71.2 386.6,89.8 395.4,82.5 404.2,0.6 521.5,0.6" fill="none" stroke="#00ff00" stroke-width="1.1" shape-rendering="auto"/>
</svg>
<div class="t" style="left:1104px;top:113px;font-size:11.3px;">CPU - Gesamt</div>
<div class="t" style="right:42px;top:113px;font-size:11px;text-align:right;">100%</div>
<div class="t" style="left:1623px;top:234px;font-size:11px;"></div>
<div style="left:1628px;top:120px;width:6px;height:124px;border-top:1px solid #000;border-right:1px solid #000;border-bottom:1px solid #000;"></div>
<div class="t" style="left:1104px;top:234px;font-size:11.3px;">60 Sekunden</div>
<div class="t" style="right:42px;top:234px;font-size:11px;text-align:right;">0%</div>
<div style="left:1102px;top:268px;width:523px;height:2px;background:linear-gradient(#bdbdbd,#7d7d7d);"></div>
<div style="left:1102px;top:268px;width:2px;height:102px;background:linear-gradient(90deg,#bdbdbd,#7d7d7d);"></div>
<svg style="left:1104px;top:270px" width="521" height="100" viewBox="0 0 521 100" shape-rendering="crispEdges">
<defs><clipPath id="c2"><polygon points="-0.2,91.4 9.4,91.4 17.3,95.5 26.4,92.4 35.8,99.6 44.6,95.0 62.4,66.6 78.0,89.4 89.8,97.0 108.1,89.4 117.5,68.9 125.1,55.5 134.4,91.4 143.9,83.3 152.6,86.3 162.4,88.9 170.8,93.2 179.9,98.5 188.3,97.4 197.4,98.5 207.2,95.5 215.6,94.0 224.7,89.4 233.0,88.6 242.9,92.4 252.0,97.0 261.1,92.4 269.7,82.5 278.5,94.4 287.1,91.4 297.0,97.4 306.1,95.0 314.5,90.9 323.6,85.6 332.7,92.4 341.8,94.7 350.1,95.5 359.2,94.4 368.1,92.4 377.5,95.5 386.6,97.4 395.4,92.0 404.2,39.3 413.3,12.7 422.4,49.1 431.5,71.9 440.7,64.3 449.5,27.1 457.4,40.8 467.2,51.4 476.8,63.1 485.5,54.5 494.6,66.1 503.7,60.5 515.1,60.5 521.5,62.0 522,101 -1,101"/></clipPath></defs>
<rect width="521" height="100" fill="#000"/>
<g fill="#0f7f0f"><rect x="27" y="0" width="1" height="100"/><rect x="72" y="0" width="1" height="100"/><rect x="117" y="0" width="1" height="100"/><rect x="162" y="0" width="1" height="100"/><rect x="207" y="0" width="1" height="100"/><rect x="252" y="0" width="1" height="100"/><rect x="297" y="0" width="1" height="100"/><rect x="342" y="0" width="1" height="100"/><rect x="387" y="0" width="1" height="100"/><rect x="432" y="0" width="1" height="100"/><rect x="477" y="0" width="1" height="100"/><rect x="0" y="10" width="521" height="1"/><rect x="0" y="20" width="521" height="1"/><rect x="0" y="30" width="521" height="1"/><rect x="0" y="40" width="521" height="1"/><rect x="0" y="50" width="521" height="1"/><rect x="0" y="60" width="521" height="1"/><rect x="0" y="70" width="521" height="1"/><rect x="0" y="80" width="521" height="1"/><rect x="0" y="90" width="521" height="1"/></g>
<polygon points="-0.2,91.4 9.4,91.4 17.3,95.5 26.4,92.4 35.8,99.6 44.6,95.0 62.4,66.6 78.0,89.4 89.8,97.0 108.1,89.4 117.5,68.9 125.1,55.5 134.4,91.4 143.9,83.3 152.6,86.3 162.4,88.9 170.8,93.2 179.9,98.5 188.3,97.4 197.4,98.5 207.2,95.5 215.6,94.0 224.7,89.4 233.0,88.6 242.9,92.4 252.0,97.0 261.1,92.4 269.7,82.5 278.5,94.4 287.1,91.4 297.0,97.4 306.1,95.0 314.5,90.9 323.6,85.6 332.7,92.4 341.8,94.7 350.1,95.5 359.2,94.4 368.1,92.4 377.5,95.5 386.6,97.4 395.4,92.0 404.2,39.3 413.3,12.7 422.4,49.1 431.5,71.9 440.7,64.3 449.5,27.1 457.4,40.8 467.2,51.4 476.8,63.1 485.5,54.5 494.6,66.1 503.7,60.5 515.1,60.5 521.5,62.0 522,101 -1,101" fill="#005f00"/>
<g fill="#0ce40c" clip-path="url(#c2)"><rect x="27" y="0" width="1" height="100"/><rect x="72" y="0" width="1" height="100"/><rect x="117" y="0" width="1" height="100"/><rect x="162" y="0" width="1" height="100"/><rect x="207" y="0" width="1" height="100"/><rect x="252" y="0" width="1" height="100"/><rect x="297" y="0" width="1" height="100"/><rect x="342" y="0" width="1" height="100"/><rect x="387" y="0" width="1" height="100"/><rect x="432" y="0" width="1" height="100"/><rect x="477" y="0" width="1" height="100"/><rect x="0" y="10" width="521" height="1"/><rect x="0" y="20" width="521" height="1"/><rect x="0" y="30" width="521" height="1"/><rect x="0" y="40" width="521" height="1"/><rect x="0" y="50" width="521" height="1"/><rect x="0" y="60" width="521" height="1"/><rect x="0" y="70" width="521" height="1"/><rect x="0" y="80" width="521" height="1"/><rect x="0" y="90" width="521" height="1"/></g>
<polyline points="-0.2,91.4 9.4,91.4 17.3,95.5 26.4,92.4 35.8,99.6 44.6,95.0 62.4,66.6 78.0,89.4 89.8,97.0 108.1,89.4 117.5,68.9 125.1,55.5 134.4,91.4 143.9,83.3 152.6,86.3 162.4,88.9 170.8,93.2 179.9,98.5 188.3,97.4 197.4,98.5 207.2,95.5 215.6,94.0 224.7,89.4 233.0,88.6 242.9,92.4 252.0,97.0 261.1,92.4 269.7,82.5 278.5,94.4 287.1,91.4 297.0,97.4 306.1,95.0 314.5,90.9 323.6,85.6 332.7,92.4 341.8,94.7 350.1,95.5 359.2,94.4 368.1,92.4 377.5,95.5 386.6,97.4 395.4,92.0 404.2,39.3 413.3,12.7 422.4,49.1 431.5,71.9 440.7,64.3 449.5,27.1 457.4,40.8 467.2,51.4 476.8,63.1 485.5,54.5 494.6,66.1 503.7,60.5 515.1,60.5 521.5,62.0" fill="none" stroke="#00ff00" stroke-width="1.1" shape-rendering="auto"/>
</svg>
<div class="t" style="left:1104px;top:251px;font-size:11.3px;">CPU-Auslastung - Dienste</div>
<div class="t" style="right:42px;top:251px;font-size:11px;text-align:right;">100%</div>
<div class="t" style="left:1623px;top:372px;font-size:11px;"></div>
<div style="left:1628px;top:258px;width:6px;height:124px;border-top:1px solid #000;border-right:1px solid #000;border-bottom:1px solid #000;"></div>
<div class="t" style="right:42px;top:372px;font-size:11px;text-align:right;">0%</div>
</body></html>
